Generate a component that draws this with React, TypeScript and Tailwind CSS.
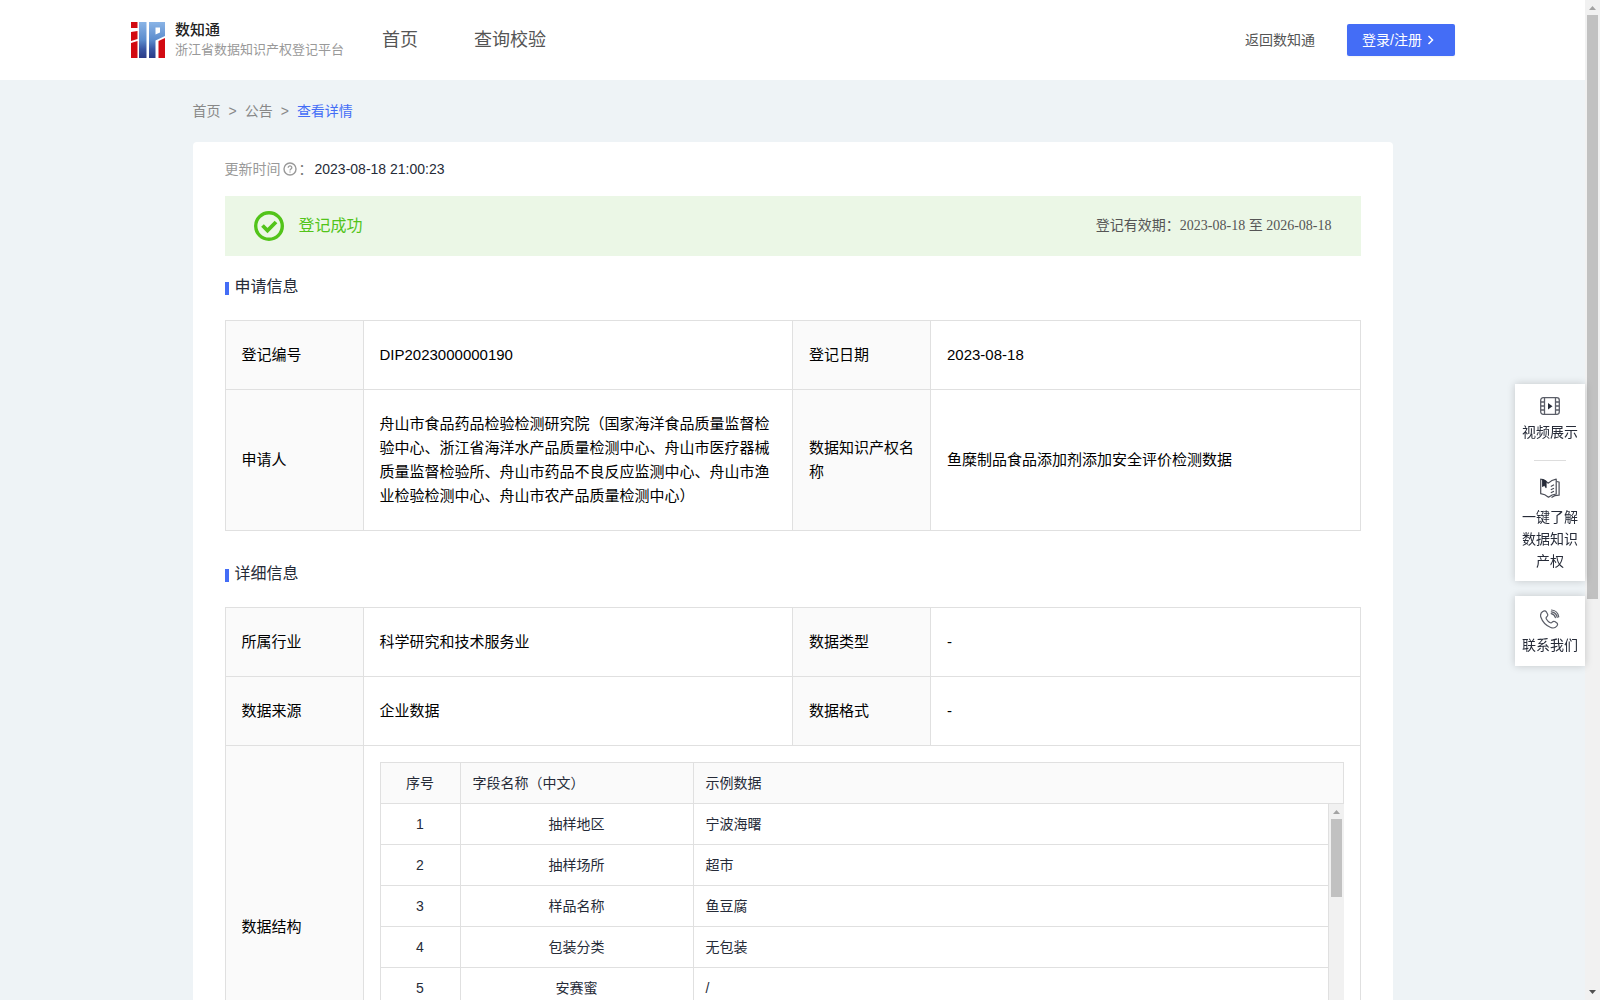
import React from "react";

const SANS = "font-['Liberation_Sans','Noto_Sans_CJK_SC',sans-serif]";
const SERIF = "font-['Liberation_Serif','Noto_Sans_CJK_SC',serif]";

function Logo() {
  return (
    <svg width="34" height="36" viewBox="0 0 34 36" aria-hidden="true">
      <defs>
        <linearGradient id="blue" gradientUnits="userSpaceOnUse" x1="0" y1="0" x2="0" y2="36">
          <stop offset="0" stopColor="#8ab4e6" />
          <stop offset="0.5" stopColor="#5c8ccd" />
          <stop offset="0.75" stopColor="#3a57a4" />
          <stop offset="1" stopColor="#2b3a86" />
        </linearGradient>
      </defs>
      <path fill="#d20a12" d="M0 0h6.500v6H0zM0 10l6.500-1v8L0 19zM0 21l6.500-2v17H0z" />
      <path fill="url(#blue)" d="M8 0h7.500v36H8z" />
      <path
        fill="url(#blue)"
        fillRule="evenodd"
        d="M18 0h16v14L24.500 18.500V36H18zM24.500 5.500v7l4.500-2v-5z"
      />
      <path fill="#d20a12" d="M27.500 19L34 16v20h-6.500z" />
    </svg>
  );
}

function Triangle({ down = false, light = false }: { down?: boolean; light?: boolean }) {
  return (
    <svg width="15" height="15" viewBox="0 0 15 15" className="shrink-0" aria-hidden="true">
      <path d={down ? "M4 5h7l-3.500 4z" : "M4 10h7L7.500 6z"} fill={light ? "#a3a3a3" : "#505050"} />
    </svg>
  );
}

function SectionTitle({ children }: { children: React.ReactNode }) {
  return (
    <h2 className="flex items-center gap-1.5 text-base leading-6 text-[#262b38]">
      <span className="mt-0.5 h-[13px] w-1 bg-[#446df6]" />
      {children}
    </h2>
  );
}

function Th({ children }: { children: React.ReactNode }) {
  return (
    <th scope="row" className="border border-[#e0e0e0] bg-[#fafafa] px-4 py-[22px] text-left font-normal">
      {children}
    </th>
  );
}

function Td({ children }: { children: React.ReactNode }) {
  return <td className="border border-[#e0e0e0] px-4 py-[22px]">{children}</td>;
}

function InfoTable({ children }: { children: React.ReactNode }) {
  return (
    <table className="w-full table-fixed border-collapse text-[15px] leading-6 text-black">
      <colgroup>
        <col className="w-[138px]" />
        <col />
        <col className="w-[138px]" />
        <col />
      </colgroup>
      <tbody>{children}</tbody>
    </table>
  );
}

function FieldCols() {
  return (
    <colgroup>
      <col className="w-20" />
      <col className="w-[233px]" />
      <col />
    </colgroup>
  );
}

const fields = [
  ["抽样地区", "宁波海曙"],
  ["抽样场所", "超市"],
  ["样品名称", "鱼豆腐"],
  ["包装分类", "无包装"],
  ["安赛蜜", "/"],
  ["", ""],
  ["", ""],
];

const fieldCell = "h-[41px] border-r border-b border-[#e0e0e0] px-3";

function FieldTable() {
  return (
    <div className="text-sm leading-5 text-[#262b38]">
      <table className="w-full table-fixed border-separate border-spacing-0 border-t border-l border-[#e0e0e0] bg-[#fafafa]">
        <FieldCols />
        <thead>
          <tr>
            <th className={`${fieldCell} text-center font-normal`}>序号</th>
            <th className={`${fieldCell} text-left font-normal`}>字段名称（中文）</th>
            <th className={`${fieldCell} text-left font-normal`}>示例数据</th>
          </tr>
        </thead>
      </table>
      <div className="flex">
        <table className="min-w-0 flex-1 table-fixed border-separate border-spacing-0 border-l border-[#e0e0e0]">
          <FieldCols />
          <tbody>
            {fields.map(([name, sample], i) => (
              <tr key={i}>
                <td className={`${fieldCell} text-center`}>{name ? i + 1 : ""}</td>
                <td className={`${fieldCell} text-center`}>{name}</td>
                <td className={fieldCell}>{sample}</td>
              </tr>
            ))}
          </tbody>
        </table>
        <div className="flex w-[15px] flex-col items-center bg-[#f1f1f1]">
          <Triangle light />
          <div className="h-[78px] w-[11px] bg-[#c1c1c1]" />
        </div>
      </div>
    </div>
  );
}

function VideoIcon() {
  return (
    <svg width="20" height="18" viewBox="0 0 20 18" fill="none" stroke="#5b5e68" strokeWidth="1.300" aria-hidden="true">
      <rect x="0.700" y="0.700" width="18.600" height="16.600" rx="2.500" />
      <path d="M4.500 1v16M15.500 1v16M1 5h3.500M1 9h3.500M1 13h3.500M15.500 5H19M15.500 9H19M15.500 13H19" />
      <path d="M8 6v6.500l4.500-3.250z" fill="#262b38" stroke="none" />
    </svg>
  );
}

function BookIcon() {
  return (
    <svg width="20" height="21" viewBox="0 0 20 21" fill="none" stroke="#4a4d57" strokeWidth="1.200" strokeLinejoin="round" aria-hidden="true">
      <path d="M0.700 1.200C3.500 1.500 6 3 8.300 5.200 10.500 3 13 1.700 16.200 1.200V16c-3 .3-5.500 1.400-7.700 3.200C6.200 17.200 3.500 16 0.700 15.700z" />
      <path d="M16.500 3.500l2.600.5v13.200c-3-.1-5.300.6-7.600 2.300" />
      <path d="M2.700 1.500v6.800l1.600-1.500 1.700 2.700V3.300z" fill="#262b38" stroke="#262b38" />
      <path d="M10.800 8.500l3.200-1.700M10.800 11.700l3.200-1.500M10.800 14.800l3.200-1.500" />
    </svg>
  );
}

function PhoneIcon() {
  return (
    <svg width="20" height="20" viewBox="0 0 20 20" fill="none" stroke="#5b5e68" strokeWidth="1.200" strokeLinecap="round" strokeLinejoin="round" aria-hidden="true">
      <path d="M2.700 2.600C4 1.400 5.500 1.600 6.300 2.800L7.500 5c.6 1.100.2 2-.7 2.700-.9.700-.9 1.500-.3 2.500.8 1.300 1.900 2.500 3.200 3.300 1 .6 1.800.5 2.500-.4.7-.8 1.600-1.100 2.600-.5l1.800 1.200c1.200.8 1.300 1.900.3 3.200-1.500 1.900-3.600 2.500-6.200 1.500C6.200 16.700 2.500 12.900.9 8.300.1 6 .7 4 2.700 2.600z" />
      <path d="M11.200 4.700c2.300.4 3.700 1.800 4.200 4M11.300 2.800c3.200.4 5.300 2.500 5.900 5.500M11.500 1c4 .4 6.600 3 7.200 6.800" />
    </svg>
  );
}

export default function App() {
  return (
    <div className={`flex h-screen overflow-hidden bg-[#eef3f6] ${SANS}`}>
      <div className="flex min-w-0 flex-1 flex-col">
        <header className="flex h-20 shrink-0 items-center bg-white px-[130px] text-[#555]">
          <a href="#" className="flex items-center gap-2.5 pl-px whitespace-nowrap">
            <Logo />
            <span className="flex w-[164px] flex-col">
              <span className="text-[15px] leading-5 font-medium text-[#222]">数知通</span>
              <span className="text-[13px] leading-5 text-[#999]">浙江省数据知识产权登记平台</span>
            </span>
          </a>
          <nav className="ml-[43px] flex gap-14 text-lg">
            <a href="#">首页</a>
            <a href="#">查询校验</a>
          </nav>
          <a href="#" className="ml-auto text-sm">返回数知通</a>
          <button className="ml-8 flex h-8 w-[108px] items-center rounded-xs bg-[#446df6] pl-[15px] text-sm text-white shadow-xs">
            登录/注册
            <svg width="16" height="12" viewBox="0 0 16 12" fill="none" stroke="currentColor" strokeWidth="1.500" aria-hidden="true">
              <path d="M6.500 2l4 4-4 4" />
            </svg>
          </button>
        </header>

        <div className="mx-auto w-full max-w-[1200px]">
          <nav className="flex h-[62px] items-center gap-2 text-sm text-[#888]">
            <a href="#">首页</a>
            <span>&gt;</span>
            <a href="#">公告</a>
            <span>&gt;</span>
            <a href="#" className="text-[#446df6]">查看详情</a>
          </nav>

          <main className="rounded bg-white px-8 pt-4 pb-8">
            <div className="flex h-[22px] items-center text-sm">
              <span className="text-[#999]">更新时间</span>
              <svg width="18" height="14" viewBox="0 0 18 14" fill="none" stroke="#999" aria-hidden="true">
                <circle cx="9" cy="7" r="6" strokeWidth="1.400" />
                <path d="M7.200 5.800c0-2.600 3.700-2.400 3.600-.1 0 1.300-1.800 1.300-1.800 2.700M9 9.500v1" strokeWidth="1.300" />
              </svg>
              <span className="text-[#777]">：</span>
              <time className="ml-0.5 text-[#262b38]">2023-08-18 21:00:23</time>
            </div>

            <div className="mt-4 flex h-[60px] items-center justify-between bg-[#ebf7e6] px-[29px]">
              <div className="flex items-center gap-[15px] text-base text-[#52c41a]">
                <svg width="30" height="30" viewBox="0 0 30 30" fill="none" stroke="#52c41a" aria-hidden="true">
                  <circle cx="15" cy="15" r="13.300" strokeWidth="3.400" />
                  <path d="M8.500 14.500l5 5 8.500-8.500" strokeWidth="3.800" />
                </svg>
                登记成功
              </div>
              <p className={`text-sm text-[#555] ${SERIF}`}>登记有效期：2023-08-18 至 2026-08-18</p>
            </div>

            <div className="mt-[19px] mb-[21px]">
              <SectionTitle>申请信息</SectionTitle>
            </div>
            <InfoTable>
              <tr>
                <Th>登记编号</Th>
                <Td>DIP2023000000190</Td>
                <Th>登记日期</Th>
                <Td>2023-08-18</Td>
              </tr>
              <tr>
                <Th>申请人</Th>
                <Td>
                  舟山市食品药品检验检测研究院（国家海洋食品质量监督检验中心、浙江省海洋水产品质量检测中心、舟山市医疗器械质量监督检验所、舟山市药品不良反应监测中心、舟山市渔业检验检测中心、舟山市农产品质量检测中心）
                </Td>
                <Th>数据知识产权名称</Th>
                <Td>鱼糜制品食品添加剂添加安全评价检测数据</Td>
              </tr>
            </InfoTable>

            <div className="mt-[31px] mb-[21px]">
              <SectionTitle>详细信息</SectionTitle>
            </div>
            <InfoTable>
              <tr>
                <Th>所属行业</Th>
                <Td>科学研究和技术服务业</Td>
                <Th>数据类型</Th>
                <Td>-</Td>
              </tr>
              <tr>
                <Th>数据来源</Th>
                <Td>企业数据</Td>
                <Th>数据格式</Th>
                <Td>-</Td>
              </tr>
              <tr>
                <Th>数据结构</Th>
                <td colSpan={3} className="border border-[#e0e0e0] p-4">
                  <FieldTable />
                </td>
              </tr>
            </InfoTable>
          </main>
        </div>
      </div>

      <div className="flex w-[15px] shrink-0 flex-col items-center justify-between bg-[#f1f1f1]">
        <div className="flex flex-col items-center">
          <Triangle light />
          <div className="h-[584px] w-[11px] bg-[#c1c1c1]" />
        </div>
        <Triangle down />
      </div>

      <aside className="fixed top-96 right-[15px] flex w-[70px] flex-col gap-[15px] text-center text-sm leading-[22px] text-[#262b38]">
        <div className="flex flex-col items-center bg-white px-1.5 pt-[13px] pb-[9px] shadow-[0_0_8px_rgba(0,0,0,0.18)]">
          <a href="#" className="flex flex-col items-center gap-1.5">
            <VideoIcon />
            视频展示
          </a>
          <hr className="mt-[17px] mb-[17px] w-8 border-[#ddd]" />
          <a href="#" className="flex flex-col items-center gap-[7px]">
            <BookIcon />
            一键了解数据知识产权
          </a>
        </div>
        <a href="#" className="flex flex-col items-center gap-[5px] bg-white px-1.5 pt-[13px] pb-[10px] shadow-[0_0_8px_rgba(0,0,0,0.18)]">
          <PhoneIcon />
          联系我们
        </a>
      </aside>
    </div>
  );
}
